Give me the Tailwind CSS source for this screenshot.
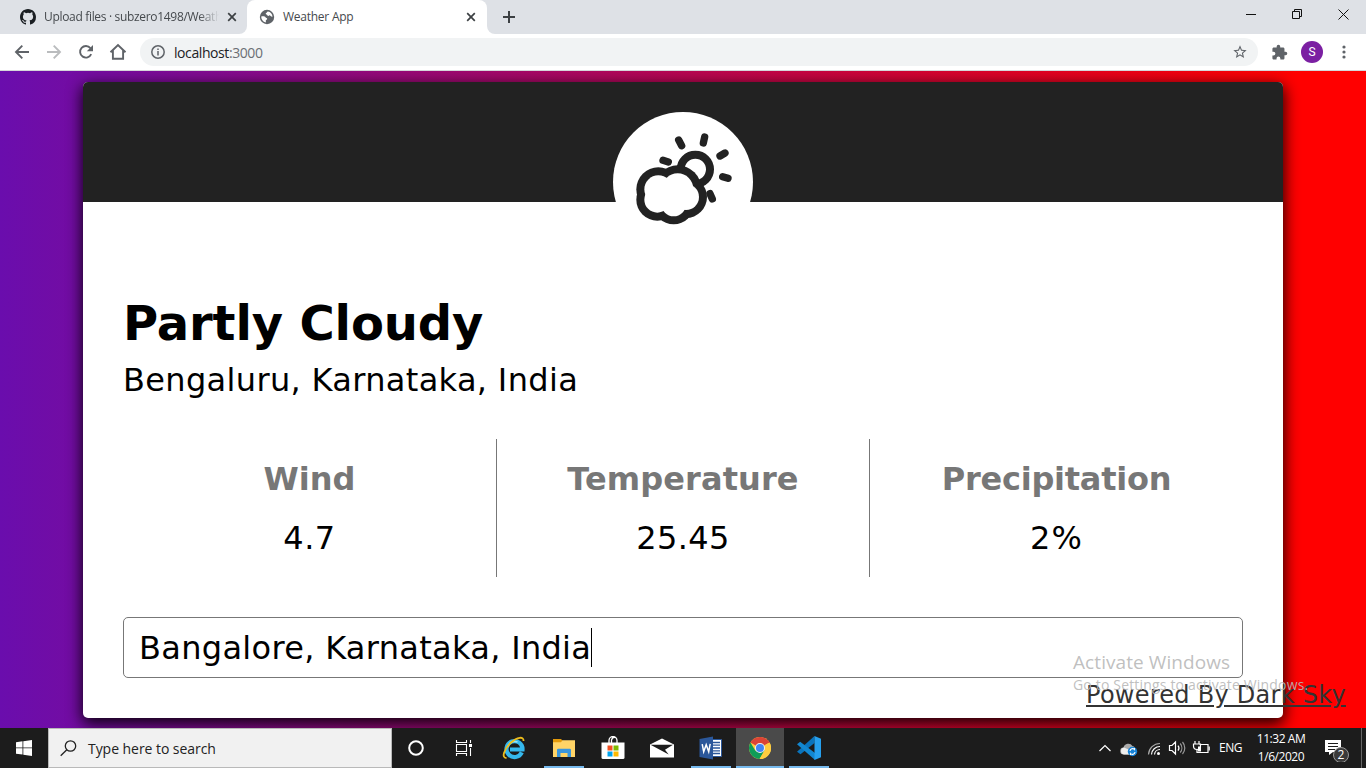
<!DOCTYPE html>
<html lang="en">
<head>
<meta charset="utf-8">
<title>Weather App</title>
<script src="https://cdn.jsdelivr.net/npm/@tailwindcss/browser@4"></script>
</head>
<body class="relative flex h-[768px] w-[1366px] flex-col overflow-hidden bg-white font-['Open_Sans',sans-serif]">

<!-- Tab strip -->
<div class="flex h-[34px] shrink-0 bg-white text-[12px] text-[#45494d]">
  <div class="flex h-full w-[247px] items-center rounded-br-lg bg-[#dee1e6] pl-5">
    <svg class="size-4 shrink-0" viewBox="0 0 16 16" fill="#1b1f23"><path d="M8 0C3.58 0 0 3.58 0 8c0 3.54 2.29 6.53 5.47 7.59.4.07.55-.17.55-.38 0-.19-.01-.82-.01-1.49-2.01.37-2.53-.49-2.69-.94-.09-.23-.48-.94-.82-1.13-.28-.15-.68-.52-.01-.53.63-.01 1.08.58 1.23.82.72 1.21 1.87.87 2.33.66.07-.52.28-.87.51-1.07-1.78-.2-3.64-.89-3.64-3.95 0-.87.31-1.59.82-2.15-.08-.2-.36-1.02.08-2.12 0 0 .67-.21 2.2.82a7.6 7.6 0 0 1 4 0c1.53-1.04 2.2-.82 2.2-.82.44 1.1.16 1.92.08 2.12.51.56.82 1.27.82 2.15 0 3.07-1.87 3.75-3.65 3.95.29.25.54.73.54 1.48 0 1.07-.01 1.93-.01 2.2 0 .21.15.46.55.38A8.01 8.01 0 0 0 16 8c0-4.42-3.58-8-8-8z"/></svg>
    <div class="ml-2 w-[175px] overflow-hidden whitespace-nowrap tracking-[-0.32px] [mask-image:linear-gradient(to_right,black_155px,transparent)]">Upload files · subzero1498/Weath</div>
    <svg class="ml-2 size-[10px] shrink-0" viewBox="0 0 10 10" stroke="#3c4043" stroke-width="1.7"><path d="M1.2 1.2l7.6 7.6M8.8 1.2L1.2 8.8"/></svg>
  </div>
  <div class="flex h-full w-[240px] bg-[#dee1e6]">
  <div class="flex h-full w-[240px] items-center rounded-t-lg bg-white pl-3">
    <svg class="size-4 shrink-0" viewBox="0 0 16 16"><circle cx="8" cy="8" r="7.2" fill="#5f6368"/><path fill="#fff" d="M9 2.4c-1.200.3-1 1.300-1.800 1.700-.8.300-.5 1.500.3 1.500 1 0 .7 1.200 1.500 1.400.8.300.6-1 1.500-.8.9.3 1.200 1.600 3 1.500C13.400 4.800 11.500 2.800 9 2.400zM2.200 7.500c1.700-.5 3.800-.3 4.300.7.300.8 1.800.5 1.700 1.700-.1.900-1.500.8-1.400 1.700.1.900.2 1.600-.1 2C4 12.800 2.100 10.200 2.200 7.500z"/></svg>
    <span class="ml-2 w-[175px] tracking-[-0.25px]">Weather App</span>
    <svg class="ml-[8px] size-[10px] shrink-0" viewBox="0 0 10 10" stroke="#3c4043" stroke-width="1.7"><path d="M1.2 1.2l7.600 7.600M8.800 1.200L1.200 8.800"/></svg>
  </div>
  </div>
  <div class="flex h-full flex-1 items-center rounded-bl-lg bg-[#dee1e6] pl-4">
    <svg class="size-3" viewBox="0 0 12 12" stroke="#3c4043" stroke-width="2"><path d="M6 0v12M0 6h12"/></svg>
    <svg class="mr-[16px] mb-[6px] ml-auto h-[12px] w-[104px]" viewBox="0 0 104 12" fill="none" stroke="#111" stroke-width="1"><path d="M0 6.500h10M46.500 3.500h7v7h-7zM48.500 3.500v-2h7v7h-2M92.500 1.500l10 10M102.500 1.500l-10 10"/></svg>
  </div>
</div>

<!-- Toolbar -->
<div class="flex h-[37px] shrink-0 items-center border-b border-[#d5d7da] bg-white pl-[14px]">
  <svg class="h-[20px] w-[116px] shrink-0" viewBox="0 0 116 20" fill="none" stroke="#5f6368" stroke-width="1.900">
    <path d="M15 10H2.500M8.300 3.700L2 10l6.300 6.300"/>
    <path stroke="#babcbe" d="M33 10h12.500M39.700 3.700L46 10l-6.300 6.300"/>
    <path d="M77.200 12.200a5.800 5.800 0 1 1-.8-6.100"/><path fill="#5f6368" stroke="none" d="M79 3v6.200h-6.200z"/>
    <path d="M96.500 10.200L104 3l7.500 7.200M98.900 8.500v8.300h10.200V8.500" />
  </svg>
  <div class="ml-[10px] flex h-7 w-[1118px] items-center rounded-full bg-[#f1f3f4] pl-[11px] text-[14px] text-[#202124]">
    <svg class="size-[14px]" viewBox="0 0 14 14" fill="none" stroke="#5f6368" stroke-width="1.500"><circle cx="7" cy="7" r="6.200"/><path d="M7 6v4.500M7 3.500v1.600"/></svg>
    <span class="ml-[9px] tracking-[-0.42px]">localhost<span class="text-[#6b6f74]">:3000</span></span>
    <svg class="mr-[10px] ml-auto size-4" viewBox="0 0 24 24" fill="#5f6368"><path d="M22 9.240l-7.190-.62L12 2 9.190 8.630 2 9.240l5.460 4.730L5.820 21 12 17.270 18.180 21l-1.630-7.030L22 9.240zM12 15.400l-3.760 2.270 1-4.280-3.320-2.880 4.380-.38L12 6.100l1.710 4.040 4.380.38-3.320 2.880 1 4.280L12 15.400z"/></svg>
  </div>
  <svg class="ml-[13px] size-[17px]" viewBox="0 0 24 24" fill="#5f6368"><path d="M20.500 11H19V7c0-1.100-.9-2-2-2h-4V3.500a2.500 2.500 0 0 0-5 0V5H4c-1.100 0-1.990.9-1.990 2v3.800H3.500a2.700 2.700 0 0 1 0 5.400H2V20c0 1.100.9 2 2 2h3.800v-1.500a2.700 2.700 0 0 1 5.400 0V22H17c1.100 0 2-.9 2-2v-4h1.500a2.500 2.500 0 0 0 0-5z"/></svg>
  <div class="ml-[13px] flex size-[22px] items-center justify-center rounded-full bg-[#7b1fa2] font-[Roboto] text-[12px] text-white">S</div>
  <svg class="ml-[19px] h-4 w-1" viewBox="0 0 4 16" fill="#5f6368"><circle cx="2" cy="3" r="1.600"/><circle cx="2" cy="8" r="1.600"/><circle cx="2" cy="13" r="1.600"/></svg>
</div>

<!-- Page -->
<main class="h-[657px] shrink-0 overflow-hidden bg-[linear-gradient(to_right,#6a0dad,#ff0000_95%)] px-[83px] pt-[11px] font-['DejaVu_Sans',sans-serif] text-black">
  <section class="h-[636px] w-[1200px] rounded-[5px] bg-white shadow-[0_5px_15px_1px_rgba(0,0,0,0.9)]">
    <header class="flex h-[120px] justify-center rounded-t-[5px] bg-[#222] pt-[30px]">
      <div class="size-[140px] shrink-0 rounded-full bg-white">
        <svg class="size-[140px]" viewBox="69 66 420 420">
          <circle cx="316" cy="238" r="44" fill="#fff" stroke="#222" stroke-width="24"/>
          <g stroke="#222" stroke-width="22" stroke-linejoin="round" stroke-linecap="round"><path d="M266 150l9 17M344 141l-4 18M390 198l15-9M398 260l16 5M360 311l7 16M219 211l16 5"/></g>
          <g fill="#222"><circle cx="205" cy="298" r="66"/><circle cx="263" cy="297" r="71"/><circle cx="288" cy="321" r="63"/><circle cx="251" cy="342" r="61"/><circle cx="202" cy="329" r="63"/></g>
          <g fill="#fff"><circle cx="205" cy="298" r="42"/><circle cx="263" cy="297" r="47"/><circle cx="288" cy="321" r="39"/><circle cx="251" cy="342" r="37"/><circle cx="202" cy="329" r="39"/></g>
        </svg>
      </div>
    </header>
    <div class="px-10 pt-[92px]">
      <h1 class="h-[58px] text-[48px] leading-[58px] font-bold tracking-[-0.12px] whitespace-nowrap">Partly Cloudy</h1>
      <p class="mt-[9px] h-[39px] text-[32px] leading-[39px] tracking-[0.34px] whitespace-nowrap">Bengaluru, Karnataka, India</p>
      <div class="mt-[39px] grid h-[138px] grid-cols-[374px_373px_373px] text-center text-[32px] leading-[39px]">
        <div class="border-r border-[#777] pt-[21px]"><div class="font-bold text-[#777]">Wind</div><div class="mt-5 tracking-[0.5px]">4.7</div></div>
        <div class="border-r border-[#777] pt-[21px]"><div class="font-bold tracking-[0.1px] text-[#777]">Temperature</div><div class="mt-5 tracking-[0.4px]">25.45</div></div>
        <div class="pt-[21px]"><div class="font-bold tracking-[-0.25px] text-[#777]">Precipitation</div><div class="mt-5 tracking-[1px]">2%</div></div>
      </div>
      <div class="mt-10 flex h-[61px] items-center rounded-[5px] border border-[#777] pl-[15px] text-[32px] leading-[39px] whitespace-nowrap"><span class="pt-[2px] tracking-[0.31px]">Bangalore, Karnataka, India</span><span class="h-[39px] w-px bg-black"></span></div>
    </div>
  </section>
</main>

<a class="absolute top-[681px] left-[1086px] font-['DejaVu_Sans',sans-serif] text-[24px] leading-[29px] tracking-[0.26px] whitespace-nowrap text-[#333] underline">Powered By Dark Sky</a>
<div class="absolute top-[649px] left-[1073px] whitespace-nowrap text-[#b8b8b8]/90">
  <div class="text-[19px] leading-[26px] tracking-[0.08px]">Activate Windows</div>
  <div class="mt-[1px] text-[14px] leading-[18px] tracking-[0.17px]">Go to Settings to activate Windows.</div>
</div>

<!-- Taskbar -->
<footer class="flex h-10 shrink-0 bg-[#1c1c1c] text-white">
  <div class="flex w-12 items-center justify-center"><svg class="size-4" viewBox="0 0 16 16" fill="#fff"><path d="M0 2.200L6.500 1.300v6.200H0zM7.300 1.200L16 0v7.500H7.300zM0 8.300h6.500v6.300L0 13.700zM7.300 8.300H16V16l-8.700-1.300z"/></svg></div>
  <div class="flex w-[344px] items-center border border-[#b9b9b9] bg-[#f1f1f1] pl-[11px] text-[14px] text-[#222]">
    <svg class="size-[17px]" viewBox="0 0 17 17" fill="none" stroke="#222" stroke-width="1.300"><circle cx="10.500" cy="6" r="5.200"/><path d="M6.800 9.700L.7 15.800"/></svg>
    <span class="ml-[11px] tracking-[-0.05px]">Type here to search</span>
  </div>
  <div class="flex w-12 items-center justify-center"><svg class="size-4" viewBox="0 0 16 16" fill="none" stroke="#fff" stroke-width="2"><circle cx="8" cy="8" r="6.800"/></svg></div>
  <div class="flex w-[48px] items-center justify-center"><svg class="h-4 w-[18px]" viewBox="0 0 18 16" fill="none" stroke="#fff" stroke-width="1.100"><path d="M1.500 0v2.500h10V0M1.500 4.500h10v7h-10zM1.500 16v-2.500h10V16M15.500 0v3M15.500 8v8"/><path fill="#fff" stroke="none" d="M14 4h3v3h-3z"/></svg></div>
  <div class="flex w-[52px] items-center justify-center">
    <svg class="h-6 w-[24px]" viewBox="0 0 24 24" fill="none"><path d="M19.800 16.400A8 8 0 1 1 20.500 13.500H8" stroke="#35b8ed" stroke-width="4.200"/><path d="M5.500 11a7.500 7.500 0 0 1 10-5" stroke="#9be5fb" stroke-width="1.500"/><path d="M4.500 22C-1 22 2 13 9 6.500 15 1 22 0 21.500 5" stroke="#edbd1c" stroke-width="1.800"/></svg>
  </div>
  <div class="flex w-12 flex-col items-center"><svg class="mt-[11px] h-[18px] w-[22px]" viewBox="0 0 22 18"><path fill="#e39a0b" d="M0 0h8l1.500 1.500V4H0z"/><path fill="#ffd467" d="M9.500 1.200H22V18H0V3.200h8z"/><path fill="#3a96dd" d="M4 11a1.200 1.200 0 0 1 1.200-1.200h11.600A1.200 1.200 0 0 1 18 11v7h-3.500v-4h-7v4H4z"/></svg><div class="mt-auto h-[2px] w-10 bg-[#76b9ed]"></div></div>
  <div class="flex w-12 items-center justify-center"><svg class="ml-px h-6 w-6" viewBox="0 0 24 24"><path d="M8 7V4.500a4 4 0 0 1 8 0V7M10.500 7V4a3.500 3.500 0 0 1 4-2.500" fill="none" stroke="#fff" stroke-width="1.300"/><path fill="#fff" d="M.5 6.500h23v15a1.500 1.500 0 0 1-1.500 1.500H2a1.500 1.500 0 0 1-1.500-1.500z"/><path fill="#f25022" d="M6.500 9.500h5v5h-5z"/><path fill="#7fba00" d="M12.500 9.500h5v5h-5z"/><path fill="#00a4ef" d="M6.500 15.500h5v5h-5z"/><path fill="#ffb900" d="M12.500 15.500h5v5h-5z"/></svg></div>
  <div class="flex w-[52px] items-center justify-center"><svg class="h-5 w-6" viewBox="0 0 24 20"><path fill="#fff" d="M0 6.500L12 .5l12 6V19.500H0z"/><path fill="#1c1c1c" d="M.5 6.800H23L15 11.800l3.700 4.600z"/></svg></div>
  <div class="flex w-[46px] flex-col items-center"><svg class="mt-[8px] h-[24px] w-[24px]" viewBox="0 0 24 24"><path fill="#fff" stroke="#2b579a" d="M13 3.500h9.500v17H13z"/><path stroke="#2b579a" stroke-width="1.300" d="M14 6.500h7M14 9.200h7M14 12h7M14 14.800h7M14 17.500h7"/><path fill="#2b579a" d="M.5 3L14 .500v23L.500 21z"/><path fill="none" stroke="#fff" stroke-width="1.500" d="M3.200 8.200l1.500 7.500L7.200 8.800l2.500 6.900 1.500-7.900"/></svg><div class="mt-auto h-[2px] w-10 bg-[#76b9ed]"></div></div>
  <div class="ml-[2px] flex w-[48px] flex-col items-center bg-[#4a4a4a]">
    <svg class="mt-[9px] size-[22px]" viewBox="0 0 24 24"><circle cx="12" cy="12" r="12" fill="#ffcd40"/><path fill="#db4437" d="M12 12L1.600 6A12 12 0 0 1 22.400 6z"/><path fill="#0f9d58" d="M1.600 6A12 12 0 0 0 11.500 24L17 14.500 12 12 7 15z"/><path fill="#ffcd40" d="M11.500 24L17.200 14.700 17 9l5.400-3A12 12 0 0 1 11.500 24z"/><path fill="#db4437" d="M12 6.500h10.700L22 5.300H12z"/><circle cx="12" cy="12" r="5.500" fill="#f1f1f1"/><circle cx="12" cy="12" r="4.400" fill="#4285f4"/></svg>
    <div class="mt-auto h-[2px] w-full bg-[#76b9ed]"></div>
  </div>
  <div class="flex w-[50px] flex-col items-center"><svg class="mt-[8px] h-6 w-6" viewBox="0 0 24 24"><path fill="#0a74bd" d="M17.500 0v7L3.500 18.200 0 15.800z"/><path fill="#1287d1" d="M0 8.200L3.200 5.700 18 17v7z"/><path fill="#26a0ee" d="M17.500 0L24 2.800v18.400L17.500 24z"/></svg><div class="mt-auto h-[2px] w-10 bg-[#76b9ed]"></div></div>

  <div class="ml-auto flex items-center">
    <svg class="h-6 w-[113px]" viewBox="1098 0 113 24" fill="none" stroke="#fff" stroke-width="1.200">
      <path d="M1099.500 15l5.500-5.500 5.500 5.500"/>
      <path fill="#aaa" stroke="none" d="M1124 18.500a3.500 3.500 0 0 1-.5-7 5 5 0 0 1 9-1.500 4 4 0 0 1 3 4v4.500z"/><path fill="#eee" stroke="none" d="M1121 15a3.500 3.500 0 0 1 3-3.500l9 4v3h-9a3.500 3.500 0 0 1-3-3.500z"/><circle cx="1132.500" cy="15.500" r="4.700" fill="#1683d8" stroke="none"/><path stroke-width="1.100" d="M1130 15a2.600 2.600 0 0 1 4.500-1.500v-1.500M1135 16a2.600 2.600 0 0 1-4.500 1.500V19"/>
      <path stroke="#aaa" d="M1148.500 18.500A11.500 11.500 0 0 1 1160 7.500"/><path d="M1151.500 18.500a8.500 8.500 0 0 1 8.500-8M1154.500 18.500a5.500 5.500 0 0 1 5.500-5"/><circle cx="1158.500" cy="17.500" r="1.500" fill="#fff" stroke="none"/>
      <path d="M1169.500 9.500h2.500l3.500-3.500v12l-3.500-3.500h-2.500zM1178 9.500a4 4 0 0 1 0 5"/><path stroke="#999" d="M1180.200 7.500a7 7 0 0 1 0 9M1182.500 6a9 9 0 0 1 0 12"/>
      <path d="M1199.500 8.500h8.500v8h-11v-3M1195 5v3M1199 5v3M1193.500 8h7v2a3.500 3.500 0 0 1-7 0zM1197 13.500v3"/><path fill="#fff" stroke="none" d="M1198 10.500h3v5h-3zM1208.500 10.500h1.300v4h-1.300z"/>
    </svg>
    <span class="ml-2 w-[24px] text-[12px] whitespace-nowrap tracking-[-0.5px]">ENG</span>
    <div class="ml-[7px] w-[62px] text-center text-[12px] leading-[18px] whitespace-nowrap tracking-[-0.45px]"><div>11:32 AM</div><div>1/6/2020</div></div>
    <svg class="ml-[13px] h-7 w-[26px]" viewBox="0 0 26 28"><path fill="#fff" d="M0 6h16v12H8l-4 3v-3H0z"/><path stroke="#1c1c1c" d="M3 9.500h10M3 12.500h10M3 15.500h7"/><circle cx="16" cy="21" r="7.500" fill="#3a3a3a" stroke="#999"/><text x="16" y="25.200" text-anchor="middle" fill="#fff" font-size="12" font-family="Open Sans">2</text></svg>
    <div class="ml-[10px] h-10 w-px bg-[#666]"></div><div class="w-1"></div>
  </div>
</footer>
</body>
</html>
